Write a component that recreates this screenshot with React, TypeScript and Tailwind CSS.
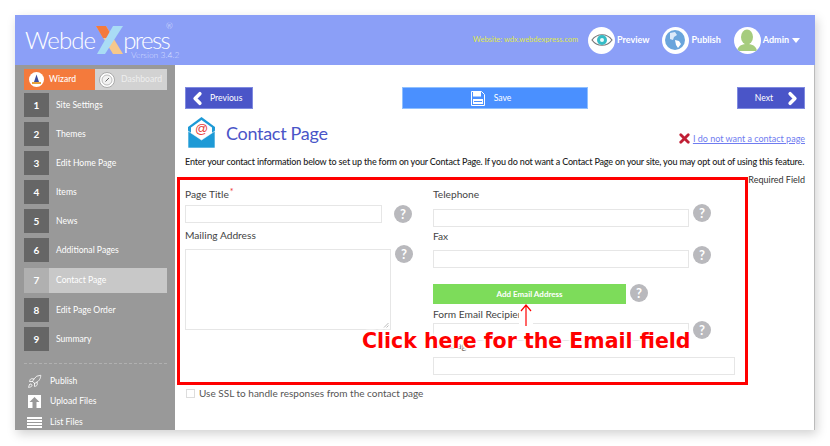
import { ChevronLeft, ChevronRight, Rocket, X } from "lucide-react"

const steps = [
  "Site Settings",
  "Themes",
  "Edit Home Page",
  "Items",
  "News",
  "Additional Pages",
  "Contact Page",
  "Edit Page Order",
  "Summary",
]

function Help({ className = "" }: { className?: string }) {
  return (
    <div
      className={`flex h-[18px] w-[18px] shrink-0 items-center justify-center rounded-full bg-[#b9b9bd] text-[13px] leading-none font-bold text-white ${className}`}
    >
      ?
    </div>
  )
}

function Field({ className = "" }: { className?: string }) {
  return <div className={`h-[18px] shrink-0 border border-[#e6e6e6] bg-white ${className}`} />
}

function Label({ children, className = "" }: { children: React.ReactNode; className?: string }) {
  return <div className={`h-[14px] text-[10.2px] leading-[14px] text-[#444] ${className}`}>{children}</div>
}

function EnvelopeIcon() {
  return (
    <svg width="29" height="31" viewBox="0 0 29 31" className="shrink-0">
      <path d="M14.5 0 L28 10 V19 H1 V10 Z" fill="#1e9ad6" />
      <path d="M14.5 3 L25 10.5 V20 H4 V10.5 Z" fill="#fff" />
      <text x="14.5" y="15.5" textAnchor="middle" fontSize="13" fontFamily="Liberation Sans" fill="#e8413c">
        @
      </text>
      <path d="M1 14 L14.5 23 L28 14 V31 H1 Z" fill="#1e9ad6" stroke="#fff" strokeWidth="0.6" />
    </svg>
  )
}

function LogoX() {
  return (
    <svg width="29" height="28" viewBox="0 0 29 28" className="shrink-0">
      <polygon points="1,0 11,0 28,28 18,28" fill="#f6c88c" />
      <polygon points="1,0 11,0 18,12 8,12" fill="#f47a3c" />
      <polygon points="18,0 28,0 10,28 2,28" fill="#a9dcf5" />
    </svg>
  )
}

function HeaderCircle({ children }: { children: React.ReactNode }) {
  return (
    <div className="flex h-[27px] w-[27px] shrink-0 items-center justify-center overflow-hidden rounded-full bg-white">
      {children}
    </div>
  )
}

function Header() {
  return (
    <div className="flex h-[50px] shrink-0 items-center bg-[#8b9ff7] pr-[15px] pl-[10px]">
      <div className="relative flex h-[28px] items-center text-[24px] leading-none font-light tracking-[-0.9px] text-white">
        <span>Webde</span>
        <LogoX />
        <span className="-ml-[1px] tracking-[-1.6px]">press</span>
        <span className="absolute top-[25px] left-[106px] text-[8.5px] tracking-normal whitespace-nowrap text-[#d4dcff]">
          Version 3.4.2
        </span>
        <span className="absolute -top-[4px] left-[141px] text-[8px] tracking-normal text-[#e4e9ff]">®</span>
      </div>
      <div className="ml-auto text-[7.5px] text-[#dfe84a]">Website: wdx.webdexpress.com</div>
      <div className="ml-[10px] flex items-center gap-[2px] text-[9px] font-bold text-white">
        <HeaderCircle>
          <svg width="22" height="14" viewBox="0 0 22 14">
            <path d="M1 7 C6 0 16 0 21 7 C16 14 6 14 1 7 Z" fill="#fff" stroke="#777" strokeWidth="1.2" />
            <circle cx="11" cy="7" r="5" fill="#35bcc6" />
            <circle cx="11" cy="7" r="2" fill="#e8fbfc" />
          </svg>
        </HeaderCircle>
        <span>Preview</span>
      </div>
      <div className="ml-[12px] flex items-center gap-[3px] text-[9px] font-bold text-white">
        <HeaderCircle>
          <svg width="20" height="20" viewBox="0 0 20 20">
            <circle cx="10" cy="10" r="10" fill="#6aa5dc" />
            <path d="M5 3 L10 2 L12 5 L9 7 L8 10 L5 9 Z" fill="#dbeafa" />
            <path d="M10 10 L14 11 L16 14 L13 18 L11 15 Z" fill="#fff" />
          </svg>
        </HeaderCircle>
        <span>Publish</span>
      </div>
      <div className="ml-[13px] flex items-center gap-[2px] text-[9px] font-bold text-white">
        <HeaderCircle>
          <svg width="22" height="24" viewBox="0 0 22 24">
            <ellipse cx="11" cy="9" rx="6" ry="7.5" fill="#a6cc7e" />
            <path d="M1 23 C2 17 7 16 11 16 C15 16 20 17 21 23 Z" fill="#a6cc7e" />
          </svg>
        </HeaderCircle>
        <span>Admin</span>
        <svg width="8" height="5" viewBox="0 0 8 5" className="ml-[1px]">
          <polygon points="0,0 8,0 4,5" fill="#fff" />
        </svg>
      </div>
    </div>
  )
}

function Sidebar() {
  return (
    <div className="flex w-[160px] shrink-0 flex-col bg-[#999] pt-[4px] pl-[9px] text-[8.6px] text-white">
      <div className="mb-[3px] flex h-[21px] w-[143px]">
        <div className="flex w-[71px] items-center gap-[5px] bg-[#f47a3c] pl-[5px] font-medium">
          <svg width="15" height="15" viewBox="0 0 15 15">
            <circle cx="7.5" cy="7.5" r="7.5" fill="#fff" />
            <path d="M7.5 2.5 L10 10 H5 Z" fill="#3d4e9e" />
            <rect x="3" y="10" width="9" height="2" fill="#e6a23c" />
          </svg>
          <span>Wizard</span>
        </div>
        <div className="flex w-[72px] items-center gap-[6px] bg-[#d2d2d2] pl-[4px] text-[#eee]">
          <svg width="16" height="16" viewBox="0 0 16 16">
            <circle cx="8" cy="8" r="7.5" fill="#fff" stroke="#aaa" />
            <circle cx="8" cy="8" r="5" fill="#f2f2f2" stroke="#bbb" />
            <path d="M6.5 9.5 L10 6" stroke="#666" strokeWidth="1" />
          </svg>
          <span>Dashboard</span>
        </div>
      </div>
      <div className="flex w-[143px] flex-col gap-[5px]">
        {steps.map((step, i) =>
          i === 6 ? (
            <div key={step} className="mt-[1px] flex h-[25px] items-center bg-[#c8c8c8]">
              <div className="flex h-full w-[25px] items-center justify-center bg-[#b0b0b0] text-[10px] font-bold">
                {i + 1}
              </div>
              <span className="ml-[7px]">{step}</span>
            </div>
          ) : (
            <div key={step} className="flex h-[24px] items-center">
              <div className="flex h-full w-[25px] items-center justify-center bg-[#666] text-[10px] font-bold">
                {i + 1}
              </div>
              <span className="ml-[7px]">{step}</span>
            </div>
          ),
        )}
      </div>
      <div className="mt-[12px] w-[143px] border-t border-dashed border-[#b0b0b0]" />
      <div className="mt-[10px] flex flex-col gap-[6.5px] pl-[3px]">
        <div className="flex h-[14px] items-center gap-[8px]">
          <Rocket size={15} strokeWidth={1.3} />
          <span>Publish</span>
        </div>
        <div className="flex h-[14px] items-center gap-[9px]">
          <svg width="13" height="13" viewBox="0 0 13 13" className="ml-[1px]">
            <rect width="13" height="13" fill="#fff" />
            <path d="M6.5 2 L11.5 7 H8.5 V13 H4.5 V7 H1.5 Z" fill="#999" />
          </svg>
          <span>Upload Files</span>
        </div>
        <div className="flex h-[14px] items-center gap-[8px]">
          <svg width="15" height="11" viewBox="0 0 15 11">
            <rect width="15" height="2" fill="#fff" />
            <rect y="3" width="15" height="2" fill="#fff" />
            <rect y="6" width="15" height="2" fill="#fff" />
            <rect y="9" width="15" height="2" fill="#fff" />
          </svg>
          <span>List Files</span>
        </div>
      </div>
    </div>
  )
}

function ContactForm() {
  return (
    <div className="relative flex h-[208px] w-[572px] border-[3px] border-[#ff0000] pl-[5px]">
      <div className="w-[248px] shrink-0 pt-[7px]">
        <Label>
          Page Title<span className="relative -top-[3px] ml-[1px] text-[9px] text-[#e33]">*</span>
        </Label>
        <div className="mt-[4px] flex">
          <Field className="w-[197px]" />
          <Help className="ml-[12px]" />
        </div>
        <Label className="mt-[5px]">Mailing Address</Label>
        <div className="mt-[7px] flex">
          <div className="relative flex h-[81px] w-[206px] items-end justify-end border border-[#e6e6e6] bg-white p-[1px]">
            <svg width="6" height="6" viewBox="0 0 6 6">
              <path d="M5.5 1 L1 5.5 M5.5 3.5 L3.5 5.5" stroke="#aaa" strokeWidth="0.8" />
            </svg>
          </div>
          <Help className="-mt-[4px] ml-[4px]" />
        </div>
      </div>
      <div className="pt-[7px]">
        <Label>Telephone</Label>
        <div className="mt-[8px] flex">
          <Field className="w-[256px]" />
          <Help className="-mt-[5px] ml-[4px]" />
        </div>
        <Label className="mt-[2px]">Fax</Label>
        <div className="mt-[7px] flex">
          <Field className="w-[256px]" />
          <Help className="-mt-[4px] ml-[4px]" />
        </div>
        <div className="mt-[16px] flex">
          <div className="flex h-[20px] w-[193px] items-center justify-center bg-[#7ddc5a] text-[8px] font-bold text-white">
            Add Email Address
          </div>
          <Help className="ml-[4px]" />
        </div>
        <Label className="mt-[3px]">Form Email Recipients</Label>
        <div className="mt-[2px] flex">
          <Field className="w-[256px]" />
          <Help className="-mt-[2px] ml-[4px]" />
        </div>
        <Label className="-mt-[3px]">Message</Label>
        <Field className="mt-[5px] w-[302px]" />
      </div>

      {/* annotation over the form */}
      <svg width="24" height="28" viewBox="0 0 24 28" className="absolute top-[120px] left-[334px]">
        <path d="M12 26 V4" fill="none" stroke="#fff" strokeWidth="14" />
        <path d="M12 26 V5 M7 11 L12 5 L17 11" fill="none" stroke="#f00" strokeWidth="1.2" />
      </svg>
      <div className="absolute top-[146px] left-[182px] font-['DejaVu_Sans'] text-[20.5px] leading-[30px] font-bold whitespace-nowrap text-[#f00] [text-shadow:0_0_2px_#fff,0_0_2px_#fff,0_0_3px_#fff,0_0_3px_#fff,0_0_4px_#fff,0_0_4px_#fff,0_3px_3px_#fff,0_3px_3px_#fff,0_-2px_3px_#fff]">
        Click here for the Email field
      </div>
    </div>
  )
}

function Main() {
  return (
    <div className="flex min-w-0 flex-1 flex-col border-r border-[#bbb] bg-white pt-[22px] pr-[9px] pl-[10px]">
      <div className="flex justify-between text-[8.6px] text-white">
        <div className="flex h-[22px] w-[68px] items-center border border-[#7f8ae0] bg-[#4a55c8] pl-[2px]">
          <ChevronLeft size={19} strokeWidth={4.5} />
          <span className="ml-[3px]">Previous</span>
        </div>
        <div className="flex h-[22px] w-[186px] items-center justify-center gap-[9px] border border-[#8fc0ff] bg-[#4a90ff] pr-[8px]">
          <svg width="14" height="15" viewBox="0 0 14 15">
            <path d="M0.5 0.5 H10.5 L13.5 3.5 V14.5 H0.5 Z" fill="#4a90ff" stroke="#fff" />
            <rect x="2" y="0.5" width="8" height="5" fill="#fff" />
            <rect x="2" y="8" width="10" height="5" fill="#fff" />
            <rect x="3" y="10" width="8" height="1" fill="#4a90ff" />
          </svg>
          <span>Save</span>
        </div>
        <div className="flex h-[22px] w-[68px] items-center justify-end border border-[#7f8ae0] bg-[#4a55c8] pr-[2px]">
          <span className="mr-[10px]">Next</span>
          <ChevronRight size={19} strokeWidth={4.5} />
        </div>
      </div>

      <div className="mt-[8px] flex items-start pl-[2px]">
        <EnvelopeIcon />
        <div className="mt-[2px] ml-[10px] text-[18px] leading-[28px] tracking-[-0.3px] text-[#4a55c8]">
          Contact Page
        </div>
        <div className="mt-[14px] ml-auto flex items-center text-[9px] leading-[12px] text-[#6f7cf0]">
          <X size={15} strokeWidth={4.5} className="text-[#c01f35]" />
          <span className="ml-[1px] underline">I do not want a contact page</span>
        </div>
      </div>

      <p className="mt-[7px] h-[14px] text-[9px] leading-[14px] font-medium tracking-[-0.17px] whitespace-nowrap text-[#222]">
        Enter your contact information below to set up the form on your Contact Page. If you do not want a Contact
        Page on your site, you may opt out of using this feature.
      </p>

      <div className="mt-[8px] -ml-[8px] flex justify-between">
        <ContactForm />
        <div className="-mt-[3px] text-[9px] leading-[12px] whitespace-nowrap text-[#333]">Required Field</div>
      </div>

      <div className="mt-[1px] flex items-center pl-[1px]">
        <div className="h-[9px] w-[9px] border border-[#ddd] bg-white" />
        <span className="ml-[4px] text-[10px] leading-[14px] text-[#555]">
          Use SSL to handle responses from the contact page
        </span>
      </div>
    </div>
  )
}

export default function App() {
  return (
    <div className="h-[446px] w-[830px] overflow-hidden bg-white pt-[15px] pl-[15px] font-['Lato',sans-serif]">
      <div className="flex h-[415px] w-[800px] flex-col overflow-hidden shadow-[2px_4px_10px_rgba(0,0,0,0.18)]">
        <Header />
        <div className="flex min-h-0 flex-1">
          <Sidebar />
          <Main />
        </div>
      </div>
    </div>
  )
}
